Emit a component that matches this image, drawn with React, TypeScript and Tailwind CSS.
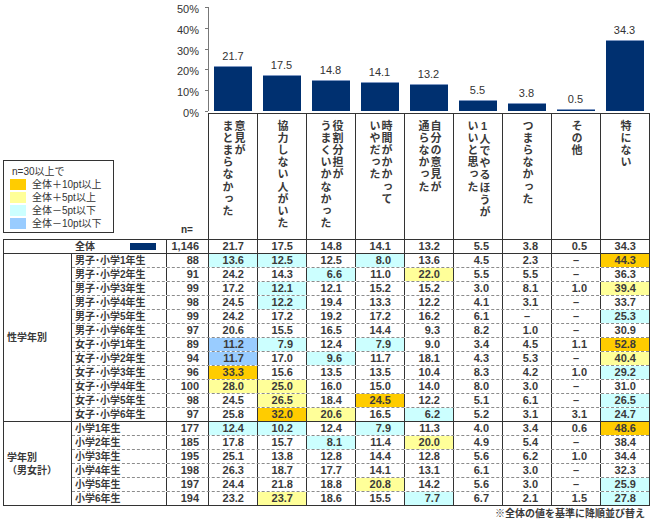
const headers = [
  "意見が\nまとまらなかった",
  "協力しない人がいた",
  "役割分担が\nうまくいかなかった",
  "時間がかかって\nいやだった",
  "自分の意見が\n通らなかった",
  "1人でやるほうが\nいいと思った",
  "つまらなかった",
  "その他",
  "特にない",
];

const totals = [21.7, 17.5, 14.8, 14.1, 13.2, 5.5, 3.8, 0.5, 34.3];

const byGender: [string, string, string][] = [
  ["男子･小学1年生", "88", "13.6:c 12.5:c 12.5 8.0:c 13.6 4.5 2.3 – 44.3:o"],
  ["男子･小学2年生", "91", "24.2 14.3 6.6:c 11.0 22.0:y 5.5 5.5 – 36.3"],
  ["男子･小学3年生", "99", "17.2 12.1:c 12.1 15.2 15.2 3.0 8.1 1.0 39.4:y"],
  ["男子･小学4年生", "98", "24.5 12.2:c 19.4 13.3 12.2 4.1 3.1 – 33.7"],
  ["男子･小学5年生", "99", "24.2 17.2 19.2 17.2 16.2 6.1 – – 25.3:c"],
  ["男子･小学6年生", "97", "20.6 15.5 16.5 14.4 9.3 8.2 1.0 – 30.9"],
  ["女子･小学1年生", "89", "11.2:b 7.9:c 12.4 7.9:c 9.0 3.4 4.5 1.1 52.8:o"],
  ["女子･小学2年生", "94", "11.7:b 17.0 9.6:c 11.7 18.1 4.3 5.3 – 40.4:y"],
  ["女子･小学3年生", "96", "33.3:o 15.6 13.5 13.5 10.4 8.3 4.2 1.0 29.2:c"],
  ["女子･小学4年生", "100", "28.0:y 25.0:y 16.0 15.0 14.0 8.0 3.0 – 31.0"],
  ["女子･小学5年生", "98", "24.5 26.5:y 18.4 24.5:o 12.2 5.1 6.1 – 26.5:c"],
  ["女子･小学6年生", "97", "25.8 32.0:o 20.6:y 16.5 6.2:c 5.2 3.1 3.1 24.7:c"],
];

const byGrade: [string, string, string][] = [
  ["小学1年生", "177", "12.4:c 10.2:c 12.4 7.9:c 11.3 4.0 3.4 0.6 48.6:o"],
  ["小学2年生", "185", "17.8 15.7 8.1:c 11.4 20.0:y 4.9 5.4 – 38.4"],
  ["小学3年生", "195", "25.1 13.8 12.8 14.4 12.8 5.6 6.2 1.0 34.4"],
  ["小学4年生", "198", "26.3 18.7 17.7 14.1 13.1 6.1 3.0 – 32.3"],
  ["小学5年生", "197", "24.4 21.8 18.8 20.8:y 14.2 5.6 3.0 – 25.9:c"],
  ["小学6年生", "194", "23.2 23.7:y 18.6 15.5 7.7:c 6.7 2.1 1.5 27.8:c"],
];

const fills: Record<string, string> = {
  o: "bg-[#ffcc00]",
  y: "bg-[#ffff99]",
  c: "bg-[#ccffff]",
  b: "bg-[#99ccff]",
};

const scale = 2.08;

function ValueCell({ text, last }: { text: string; last: boolean }) {
  const [v, c] = text.split(":");
  const dash = v === "–";
  return (
    <div
      className={`flex h-full items-center ${last ? "w-[48px]" : "w-[49px] border-r border-[#333]"} ${
        dash ? "justify-center" : "justify-end pr-[13px]"
      } ${c ? fills[c] : ""}`}
    >
      {v}
    </div>
  );
}

function Row({ label, n, values, last }: { label: string; n: string; values: string; last: boolean }) {
  return (
    <div className={`flex ${last ? "h-[13px]" : "h-[14px] border-b border-dashed border-[#8c8c8c]"}`}>
      <div className="flex w-[95px] items-center border-r border-[#333] pl-[3px] text-[10px]">{label}</div>
      <div className="flex w-[42px] items-center justify-end border-r border-[#333] pr-[9px]">{n}</div>
      {values.split(" ").map((t, i) => (
        <ValueCell key={i} text={t} last={i === 8} />
      ))}
    </div>
  );
}

function Group({ name, rows, bottom }: { name: React.ReactNode; rows: [string, string, string][]; bottom: boolean }) {
  return (
    <div className={`flex ${bottom ? "border-b border-[#333]" : ""}`}>
      <div className="flex w-[68px] items-center border-r border-[#333] pl-[3px] text-[10px] leading-[13px]">{name}</div>
      <div className="flex flex-col">
        {rows.map((r, i) => (
          <Row key={r[0]} label={r[0]} n={r[1]} values={r[2]} last={i === rows.length - 1} />
        ))}
      </div>
    </div>
  );
}

export default function App() {
  return (
    <div className="h-[520px] w-[653px] bg-white font-['Liberation_Sans','Noto_Sans_CJK_JP',sans-serif] text-[#333]">
      {/* chart */}
      <div className="flex h-[113px]">
        <div className="relative w-[208px]">
          {[50, 40, 30, 20, 10, 0].map((p, k) => (
            <div key={p}>
              <div className="absolute right-0 h-px w-[3px] bg-[#777]" style={{ top: 7 + k * 20.8 }} />
              <div
                className="absolute right-[9px] text-[11px] leading-[12px]"
                style={{ top: 7 + k * 20.8 - 4 }}
              >
                {p}%
              </div>
            </div>
          ))}
        </div>
        <div className="pt-[7px]">
          <div className="flex h-[104px] items-end border-l border-[#777]">
            {totals.map((v, i) => (
              <div key={i} className={`flex flex-col items-center justify-end ${i === 0 ? "w-[48px]" : "w-[49px]"}`}>
                <span className="mb-[4px] text-[11px] leading-[12px]">{v.toFixed(1)}</span>
                <div
                  className="w-[38px] border-t border-[#7f98c2] bg-[#003070]"
                  style={{ height: Math.max(2, Math.round(v * scale)) }}
                />
              </div>
            ))}
          </div>
        </div>
      </div>

      {/* column headers */}
      <div className="flex h-[126px]">
        <div className="flex w-[208px] items-end">
          <div className="mb-[6px] ml-[3px] h-[73px] w-[111px] border border-[#333] pt-[4px] text-[10px] leading-[13px]">
            <div className="pl-[8px]">n=30以上で</div>
            {[
              ["bg-[#ffcc00]", "全体＋10pt以上"],
              ["bg-[#ffff99]", "全体＋5pt以上"],
              ["bg-[#ccffff]", "全体－5pt以下"],
              ["bg-[#99ccff]", "全体－10pt以下"],
            ].map(([c, t]) => (
              <div key={t} className="flex h-[13px] items-center">
                <div className={`ml-[6px] h-[11px] w-[16px] ${c}`} />
                <span className="ml-[6px]">{t}</span>
              </div>
            ))}
          </div>
          <div className="mb-[3px] ml-auto w-[42px] text-center text-[10px] font-bold leading-[12px]">n=</div>
        </div>
        {headers.map((h, i) => (
          <div
            key={i}
            className={`flex justify-center border-t border-l border-[#333] pt-[6px] ${
              i === 8 ? "w-[50px] border-r" : "w-[49px]"
            }`}
          >
            <div className="text-[11px] font-bold leading-[12px] tracking-[1.2px] text-[#3a3a3a] [text-orientation:upright] [writing-mode:vertical-rl]">
              {h.split("\n").map((line, j) => (
                <span key={j}>
                  {j > 0 && <br />}
                  {line}
                </span>
              ))}
            </div>
          </div>
        ))}
      </div>

      {/* table */}
      <div className="ml-[3px] w-[647px] border border-[#333] text-[11px] font-bold leading-[13px] text-[#3a3a3a]">
        <div className="flex h-[14px] border-b border-[#333]">
          <div className="flex w-[163px] items-center border-r border-[#333] text-[10px]">
            <span className="ml-[71px]">全体</span>
            <div className="ml-[35px] h-[7px] w-[26px] bg-[#003070]" />
          </div>
          <div className="flex w-[42px] items-center justify-end border-r border-[#333] pr-[9px]">1,146</div>
          {totals.map((v, i) => (
            <ValueCell key={i} text={v.toFixed(1)} last={i === 8} />
          ))}
        </div>
        <Group name="性学年別" rows={byGender} bottom />
        <Group
          name={
            <span>
              学年別
              <br />
              （男女計）
            </span>
          }
          rows={byGrade}
          bottom={false}
        />
      </div>

      <div className="mt-[2px] pr-[8px] text-right text-[10px] font-bold leading-[12px] text-[#3a3a3a]">
        ※全体の値を基準に降順並び替え
      </div>
    </div>
  );
}
